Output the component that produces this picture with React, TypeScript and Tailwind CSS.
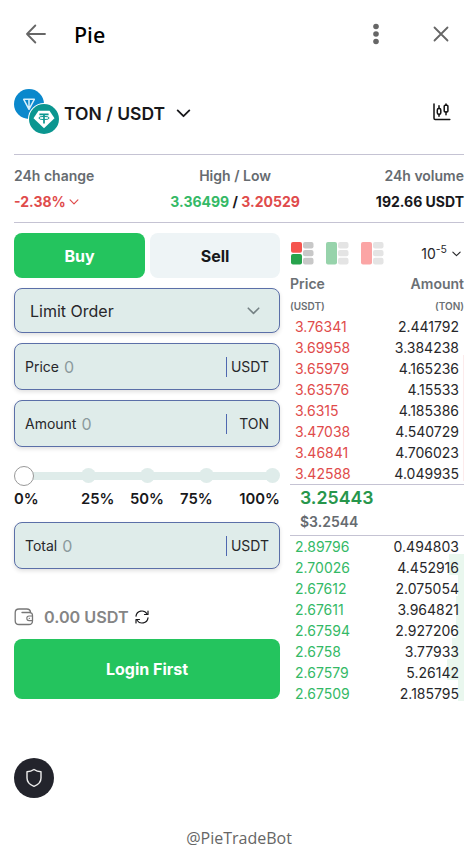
import React from 'react';

type Level = { price: string; amount: string; depth: string };

const asks: Level[] = [
  { price: '3.76341', amount: '2.441792', depth: 'w-0' },
  { price: '3.69958', amount: '3.384238', depth: 'w-0' },
  { price: '3.65979', amount: '4.165236', depth: 'w-px' },
  { price: '3.63576', amount: '4.15533', depth: 'w-px' },
  { price: '3.6315', amount: '4.185386', depth: 'w-px' },
  { price: '3.47038', amount: '4.540729', depth: 'w-px' },
  { price: '3.46841', amount: '4.706023', depth: 'w-px' },
  { price: '3.42588', amount: '4.049935', depth: 'w-px' },
];

const bids: Level[] = [
  { price: '2.89796', amount: '0.494803', depth: 'w-0' },
  { price: '2.70026', amount: '4.452916', depth: 'w-[15px]' },
  { price: '2.67612', amount: '2.075054', depth: 'w-[6px]' },
  { price: '2.67611', amount: '3.964821', depth: 'w-[8px]' },
  { price: '2.67594', amount: '2.927206', depth: 'w-[8px]' },
  { price: '2.6758', amount: '3.77933', depth: 'w-[12px]' },
  { price: '2.67579', amount: '5.26142', depth: 'w-[17px]' },
  { price: '2.67509', amount: '2.185795', depth: 'w-[6px]' },
];

function Chevron({ className }: { className: string }) {
  return (
    <svg viewBox="0 0 16 10" fill="none" stroke="currentColor" strokeWidth="2" strokeLinecap="round" strokeLinejoin="round" className={className}>
      <path d="M1.5 1.5 8 8l6.5-6.5" />
    </svg>
  );
}

function Header() {
  return (
    <header className="flex h-[69px] items-center px-[26px] pb-px text-[#666]">
      <svg width="20" height="20" viewBox="0 0 20 20" fill="none" stroke="currentColor" strokeWidth="1.8" strokeLinecap="round" strokeLinejoin="round">
        <path d="M9.3 1.500 1 10l8.300 8.500M1 10h18" />
      </svg>
      <h1 className="ml-[28px] mt-px font-['Noto_Sans',sans-serif] text-[21.500px] font-medium leading-7 text-black">Pie</h1>
      <svg width="6" height="22" viewBox="0 0 6 22" fill="currentColor" className="ml-auto">
        <circle cx="3" cy="3.5" r="2.8" />
        <circle cx="3" cy="11" r="2.8" />
        <circle cx="3" cy="18.5" r="2.8" />
      </svg>
      <svg width="16" height="16" viewBox="0 0 16 16" fill="none" stroke="currentColor" strokeWidth="1.8" strokeLinecap="round" className="ml-[54px]">
        <path d="m1.500 1.500 13 13m0-13-13 13" />
      </svg>
    </header>
  );
}

function PairLogo() {
  return (
    <svg width="46" height="46" viewBox="0 0 46 46" fill="none">
      <circle cx="15" cy="15" r="15" fill="#0a88cc" />
      <path d="M9.700 10.300h10.600l-5.300 10zM15 10.300v9.500" stroke="#d9f0fb" strokeWidth="1.5" strokeLinejoin="round" />
      <circle cx="30" cy="30" r="16" fill="#fff" />
      <circle cx="30" cy="30" r="15" fill="#0b9690" />
      <path d="M24.500 21.800h11l5 7.400L30 39.200 19.500 29.200z" fill="#fff" />
      <path d="M25.400 25.400h9.200M30 25.400v9.200" stroke="#0b9690" strokeWidth="1.7" />
      <ellipse cx="30" cy="29" rx="5.200" ry="1.6" stroke="#0b9690" strokeWidth="1" />
    </svg>
  );
}

function PairBar() {
  return (
    <div className="flex h-[85px] items-start pt-5">
      <PairLogo />
      <span className="ml-1 mt-[13px] text-[17.500px] font-semibold leading-6 text-[#18181b]">TON / USDT</span>
      <Chevron className="ml-[11px] mt-[20px] h-[9px] w-[15px] text-[#18181b]" />
      <svg width="18" height="18" viewBox="0 0 18 18" fill="none" stroke="#111" strokeWidth="1.5" strokeLinecap="round" strokeLinejoin="round" className="ml-auto mr-[13px] mt-[14px]">
        <path d="M1 .9v14.400q0 1.200 1.200 1.200h14.600" />
        <path d="M6 2.800v2.400m0 6.400v1.700M13 .9v1.400m0 6.500v3" />
        <rect x="4.3" y="5.5" width="3.5" height="5.7" rx="1.500" />
        <rect x="11.2" y="2.2" width="3.7" height="6.9" rx="1" />
      </svg>
    </div>
  );
}

function Stats() {
  return (
    <section className="flex h-[69px] justify-between border-y border-[#c5c3d3] pt-[11px] text-[14px] font-semibold leading-5">
      <div>
        <p className="text-[#666b70]">24h change</p>
        <p className="mt-1.5 flex items-center font-bold text-[#df4b4b]">
          -2.38%
          <Chevron className="ml-[3px] h-[6px] w-[10px]" />
        </p>
      </div>
      <div className="text-center">
        <p className="text-[#666b70]">High / Low</p>
        <p className="mt-1.5 font-bold text-[#18181b]">
          <span className="text-[#34b966]">3.36499</span> / <span className="text-[#df4b4b]">3.20529</span>
        </p>
      </div>
      <div className="text-right">
        <p className="text-[#666b70]">24h volume</p>
        <p className="mt-1.5 font-bold text-[#18181b]">192.66 USDT</p>
      </div>
    </section>
  );
}

function Field({ label, unit }: { label: string; unit: string }) {
  return (
    <div className="flex h-[47px] items-center rounded-lg border border-[#5b6fa8] bg-[#dfecea] px-2.5 text-[14px] text-[#27272a] shadow-[0_2px_4px_rgba(0,0,0,0.12)]">
      <span>{label}</span>
      <span className="ml-[5px] text-[16px] text-[#8b9a9d]">0</span>
      <span className="ml-auto flex h-5 w-[43px] items-center justify-end border-l border-[#4f68b0]">{unit}</span>
    </div>
  );
}

function Slider() {
  return (
    <div className="mt-[19px]">
      <div className="relative h-5">
        <div className="absolute inset-x-2 top-[6px] h-2 rounded-full bg-[#dfecea]" />
        <i className="absolute left-[67px] top-[2px] size-[15px] rounded-full bg-[#dfecea]" />
        <i className="absolute left-[126px] top-[2px] size-[15px] rounded-full bg-[#dfecea]" />
        <i className="absolute left-[185px] top-[2px] size-[15px] rounded-full bg-[#dfecea]" />
        <i className="absolute right-0 top-[2px] size-[15px] rounded-full bg-[#dfecea]" />
        <i className="absolute left-0 top-0 size-5 rounded-full border border-[#999] bg-white" />
      </div>
      <div className="mt-px grid h-6 grid-cols-[67px_49px_50px_1fr_auto] items-center text-[14.800px] font-semibold text-[#18181b]">
        <span>0%</span>
        <span>25%</span>
        <span>50%</span>
        <span>75%</span>
        <span>100%</span>
      </div>
    </div>
  );
}

function OrderForm() {
  return (
    <div className="w-[266px]">
      <div className="grid h-[45px] grid-cols-[131px_130px] gap-[5px] text-[16px] font-bold">
        <button className="rounded-lg bg-[#24c45e] text-white">Buy</button>
        <button className="rounded-lg bg-[#eef4f6] text-[#18181b]">Sell</button>
      </div>
      <div className="mt-2.5 flex h-[45px] items-center justify-between rounded-lg border border-[#5b6fa8] bg-[#dfecea] pl-[15px] pr-[19px] text-[16px] text-[#27272a] shadow-[0_2px_4px_rgba(0,0,0,0.12)]">
        Limit Order
        <Chevron className="h-[8px] w-[13px] text-[#758184]" />
      </div>
      <div className="mt-2.5 grid gap-2.5">
        <Field label="Price" unit="USDT" />
        <Field label="Amount" unit="TON" />
      </div>
      <Slider />
      <div className="mt-[11px]">
        <Field label="Total" unit="USDT" />
      </div>
      <div className="mt-9 flex h-6 items-center">
        <svg width="20" height="18" viewBox="0 0 20 18" fill="none" stroke="#777" strokeWidth="1.3" strokeLinecap="round" strokeLinejoin="round">
          <path d="M16.600 4.500Q16.300 1 12.800 1H5Q1.200 1 1.200 4.800v7.900q0 3.800 3.800 3.800h9.800q3.700 0 3.700-3.500V7.700q0-3.200-3.200-3.200H8" />
          <path d="M18.500 8h-3.400a2.300 2.300 0 0 0 0 4.600h3.400" strokeWidth="1.1" />
          <path d="M15.300 10.300h.1" />
        </svg>
        <span className="ml-2.5 text-[16.200px] font-semibold text-[#858585]">0.00 USDT</span>
        <svg width="14" height="14" viewBox="0 0 14 14" fill="none" stroke="#18181b" strokeWidth="1.2" strokeLinecap="round" strokeLinejoin="round" className="ml-[6px]">
          <path d="M1 6.200A6 6 0 0 1 12 3.800M13 7.800A6 6 0 0 1 2 10.200" />
          <path d="M13 1v3.500H9.500M1 13V9.500h3.500" />
        </svg>
      </div>
      <button className="mt-2.5 h-[60px] w-full rounded-lg bg-[#24c45e] text-[16px] font-bold text-white">Login First</button>
    </div>
  );
}

function BookIcon({ mode }: { mode: 'both' | 'bids' | 'asks' }) {
  return (
    <svg width="23" height="23" viewBox="0 0 23 23" fill={mode === 'both' ? '#c8c8c8' : '#e4e4e4'}>
      <rect x="12" y="0" width="10.5" height="6.5" rx="2" />
      <rect x="12" y="8" width="10.5" height="6.2" rx="2" />
      <rect x="12" y="15.7" width="10.5" height="6.8" rx="2" />
      {mode === 'both' && <rect width="11" height="10.8" rx="2" fill="#f5554f" />}
      {mode === 'both' && <rect y="12" width="11" height="10.5" rx="2" fill="#27a34c" />}
      {mode === 'bids' && <rect width="11" height="22.5" rx="2" fill="#97d3ab" />}
      {mode === 'asks' && <rect width="11" height="22.5" rx="2" fill="#fba5a5" />}
    </svg>
  );
}

function Levels({ rows, priceColor, depthColor }: { rows: Level[]; priceColor: string; depthColor: string }) {
  return (
    <ul>
      {rows.map((row) => (
        <li key={row.price} className="relative flex h-[21px] items-center justify-between px-[5px] text-[14px]">
          <i className={`absolute bottom-[3px] right-0 -top-[3px] ${row.depth} ${depthColor}`} />
          <span className={`relative ${priceColor}`}>{row.price}</span>
          <span className="relative text-[#27272a]">{row.amount}</span>
        </li>
      ))}
    </ul>
  );
}

function OrderBook() {
  return (
    <div className="w-[174px]">
      <div className="flex h-[41px] items-center pl-[1px]">
        <BookIcon mode="both" />
        <span className="ml-3 flex"><BookIcon mode="bids" /></span>
        <span className="ml-3 flex"><BookIcon mode="asks" /></span>
        <span className="ml-auto flex items-center text-[14px] leading-5 text-[#27272a]">
          10<span className="mb-[8px] text-[10.500px] leading-4">-5</span>
          <Chevron className="ml-[5px] mr-[3px] h-[6px] w-[9px]" />
        </span>
      </div>
      <div className="flex h-[42px] justify-between font-semibold text-[#6b7074]">
        <div>
          <p className="text-[14px] leading-5">Price</p>
          <p className="mt-[2px] text-[10px] leading-5">(USDT)</p>
        </div>
        <div className="text-right">
          <p className="text-[14px] leading-5">Amount</p>
          <p className="mt-[2px] text-[10px] leading-5">(TON)</p>
        </div>
      </div>
      <Levels rows={asks} priceColor="text-[#df4b4b]" depthColor="bg-[#fcebec]" />
      <div className="h-[52px] border-y border-[#c5c3d3] pl-2.5 font-semibold">
        <p className="text-[17.700px] leading-[25px] text-[#27964c]">3.25443</p>
        <p className="text-[14px] leading-6 text-[#666b70]">$3.2544</p>
      </div>
      <Levels rows={bids} priceColor="text-[#34b966]" depthColor="bg-[#e9f7ee]" />
    </div>
  );
}

export default function App() {
  return (
    <div className="flex h-[858px] w-[475px] flex-col overflow-hidden bg-white font-['Inter',sans-serif]">
      <Header />
      <main className="ml-[14px] w-[450px]">
        <PairBar />
        <Stats />
        <section className="mt-2.5 flex justify-between">
          <OrderForm />
          <OrderBook />
        </section>
      </main>
      <div className="ml-[14px] mt-auto flex size-10 shrink-0 items-center justify-center rounded-full bg-[#23242c]">
        <svg width="18" height="20" viewBox="0 0 18 20" fill="none" stroke="#eee" strokeWidth="1.4" strokeLinejoin="round">
          <path d="M9 1.500C7 3 4.600 3.800 2 3.800V10c0 4.200 2.800 6.800 7 8.400 4.200-1.600 7-4.200 7-8.400V3.800C13.400 3.800 11 3 9 1.500z" />
        </svg>
      </div>
      <footer className="flex h-[60px] shrink-0 items-center justify-center pl-[3px] pt-[20px] font-['Open_Sans',sans-serif] text-[16px] text-[#666]">@PieTradeBot</footer>
    </div>
  );
}
